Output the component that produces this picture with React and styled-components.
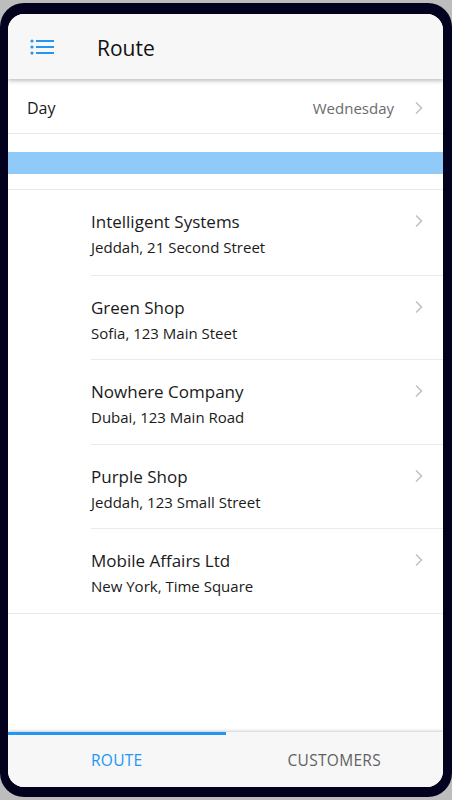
import React from 'react';
import styled, { createGlobalStyle } from 'styled-components';

const GlobalStyle = createGlobalStyle`
  html, body {
    margin: 0;
    padding: 0;
    background: #bdbdbd;
    font-family: "Open Sans", "Noto Sans", sans-serif;
  }
`;

const Frame = styled.div`
  box-sizing: border-box;
  width: 452px;
  height: 794px;
  margin-top: 3px;
  padding: 11px 9px 10px 8px;
  background: #02021f;
  border-radius: 24px;
  display: flex;
`;

const Screen = styled.div`
  flex: 1;
  display: flex;
  flex-direction: column;
  background: #ffffff;
  border-radius: 16px;
  overflow: hidden;
`;

const Header = styled.header`
  height: 65px;
  flex-shrink: 0;
  display: flex;
  align-items: center;
  background: #f7f7f7;
  box-shadow: 0 2px 4px rgba(0, 0, 0, 0.25);
  position: relative;
  z-index: 1;
`;

const MenuButton = styled.div`
  width: 24px;
  height: 16px;
  margin-left: 22px;
  display: flex;
  color: #2196f3;
`;

const Title = styled.h1`
  margin: 2px 0 0 43px;
  font-size: 21px;
  font-weight: 400;
  color: #111;
`;

const Content = styled.main`
  flex: 1;
  display: flex;
  flex-direction: column;
`;

const DayRow = styled.div`
  box-sizing: border-box;
  height: 55px;
  display: flex;
  align-items: center;
  padding: 3px 19px 0 19px;
  border-bottom: 1px solid #ebebeb;
`;

const DayLabel = styled.span`
  flex: 1;
  font-size: 16px;
  color: #1a1a1a;
`;

const DayValue = styled.span`
  font-size: 15px;
  color: #6b6b6b;
  margin-right: 20px;
`;

const Band = styled.div`
  height: 22px;
  margin-top: 18px;
  background: #90caf9;
`;

const List = styled.ul`
  list-style: none;
  margin: 15px 0 0;
  padding: 0;
  border-top: 1px solid #ebebeb;
  border-bottom: 1px solid #ebebeb;
`;

const Item = styled.li`
  height: 84.5px;
  display: flex;
  padding-left: 83px;
  & + & > div {
    border-top: 1px solid #ebebeb;
  }
`;

const ItemBody = styled.div`
  flex: 1;
  display: flex;
  align-items: flex-start;
  padding-right: 19px;
`;

const ItemText = styled.div`
  flex: 1;
  padding-top: 19px;
  display: flex;
  flex-direction: column;
`;

const ItemTitle = styled.span`
  font-size: 17px;
  color: #1a1a1a;
  line-height: 26px;
`;

const ItemSub = styled.span`
  font-size: 15px;
  color: #1a1a1a;
  line-height: 24px;
`;

const ChevronWrap = styled.div`
  padding-top: ${(p) => p.top || 0}px;
  display: flex;
`;

const TabBar = styled.nav`
  height: 55px;
  flex-shrink: 0;
  display: flex;
  background: #f7f7f7;
  box-shadow: 0 -1px 3px rgba(0, 0, 0, 0.2);
`;

const Tab = styled.div`
  flex: 1;
  display: flex;
  align-items: center;
  justify-content: center;
  font-size: 15.5px;
  letter-spacing: 0.3px;
  color: ${(p) => (p.active ? '#2196f3' : '#616161')};
  border-top: 3px solid ${(p) => (p.active ? '#2196f3' : 'transparent')};
  padding-bottom: 3px;
`;

const Chevron = () => (
  <svg width="10" height="14" viewBox="0 0 10 14">
    <path d="M2 1.5 L7.5 7 L2 12.5" fill="none" stroke="#c2c2c2" strokeWidth="1.6" />
  </svg>
);

const MenuIcon = () => (
  <svg width="24" height="16" viewBox="0 0 24 16">
    <circle cx="2" cy="2" r="1.6" fill="currentColor" />
    <circle cx="2" cy="8" r="1.6" fill="currentColor" />
    <circle cx="2" cy="14" r="1.6" fill="currentColor" />
    <rect x="6" y="1" width="18" height="2" fill="currentColor" />
    <rect x="6" y="7" width="18" height="2" fill="currentColor" />
    <rect x="6" y="13" width="18" height="2" fill="currentColor" />
  </svg>
);

const customers = [
  { name: 'Intelligent Systems', address: 'Jeddah, 21 Second Street' },
  { name: 'Green Shop', address: 'Sofia, 123 Main Steet' },
  { name: 'Nowhere Company', address: 'Dubai, 123 Main Road' },
  { name: 'Purple Shop', address: 'Jeddah, 123 Small Street' },
  { name: 'Mobile Affairs Ltd', address: 'New York, Time Square' },
];

export default function App() {
  return (
    <>
      <GlobalStyle />
      <Frame>
        <Screen>
          <Header>
            <MenuButton>
              <MenuIcon />
            </MenuButton>
            <Title>Route</Title>
          </Header>
          <Content>
            <DayRow>
              <DayLabel>Day</DayLabel>
              <DayValue>Wednesday</DayValue>
              <Chevron />
            </DayRow>
            <Band />
            <List>
              {customers.map((c) => (
                <Item key={c.name}>
                  <ItemBody>
                    <ItemText>
                      <ItemTitle>{c.name}</ItemTitle>
                      <ItemSub>{c.address}</ItemSub>
                    </ItemText>
                    <ChevronWrap top={24}>
                      <Chevron />
                    </ChevronWrap>
                  </ItemBody>
                </Item>
              ))}
            </List>
          </Content>
          <TabBar>
            <Tab active>ROUTE</Tab>
            <Tab>CUSTOMERS</Tab>
          </TabBar>
        </Screen>
      </Frame>
    </>
  );
}
